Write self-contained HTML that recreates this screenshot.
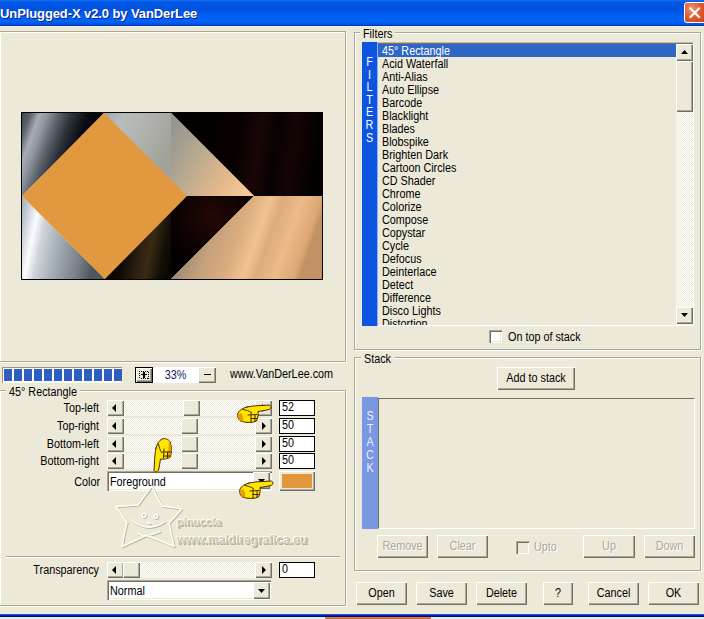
<!DOCTYPE html><html><head><meta charset="utf-8"><style>
html,body{margin:0;padding:0;}
body{width:704px;height:619px;overflow:hidden;position:relative;background:#ECE9D8;font-family:"Liberation Sans",sans-serif;font-size:11px;color:#000;}
body div, body svg{position:absolute;}
.t{white-space:pre;font-size:12px;transform:scaleX(0.9);}
</style></head><body>
<div style="left:0px;top:0px;width:704px;height:25px;background:linear-gradient(#1470F8 0%,#0058E4 8%,#0052E0 40%,#0062F6 68%,#0062F6 86%,#0054E6 96%,#004CDC 100%)"></div>
<div style="left:0px;top:25px;width:704px;height:1px;background:#0038B4"></div>
<div style="left:0px;top:26px;width:704px;height:1px;background:#EEF2FF"></div>
<div class="t" style="left:0px;top:6px;height:16px;line-height:16px;transform-origin:left top;font-weight:bold;font-size:13px;color:#fff;text-shadow:1px 1px #0A1E8C;letter-spacing:-0.1px;transform:none">UnPlugged-X v2.0 by VanDerLee</div>
<div style="left:684px;top:2px;width:24px;height:21px;border:1px solid #fff;border-radius:3px;box-sizing:border-box;background:radial-gradient(circle at 30% 30%,#F09070 0%,#E05A30 45%,#C8401A 100%)"></div>
<svg style="left:688px;top:6px" width="14" height="13" viewBox="0 0 14 13"><path d="M2.5 2.5 L11 11 M11 2.5 L2.5 11" stroke="#fff" stroke-width="2.2" stroke-linecap="square"/></svg>
<div style="left:0px;top:32px;width:347px;height:331px;border:1px solid #fff;box-sizing:border-box"></div>
<div style="left:-1px;top:31px;width:347px;height:331px;border:1px solid #ACA899;box-sizing:border-box"></div>
<svg style="left:21px;top:112px" width="302" height="168" viewBox="-1 -1 302 168">
<defs>
<linearGradient id="gTL" gradientUnits="userSpaceOnUse" x1="0" y1="0" x2="93" y2="34">
 <stop offset="0" stop-color="#3E444C"/><stop offset="0.08" stop-color="#5A6068"/><stop offset="0.17" stop-color="#A8ACB4"/><stop offset="0.24" stop-color="#9298A0"/>
 <stop offset="0.36" stop-color="#5A6068"/><stop offset="0.48" stop-color="#2C3238"/><stop offset="0.62" stop-color="#0C0E12"/><stop offset="0.8" stop-color="#000"/>
</linearGradient>
<linearGradient id="gTM" gradientUnits="userSpaceOnUse" x1="82" y1="0" x2="150" y2="30">
 <stop offset="0" stop-color="#A4A8AC"/><stop offset="0.25" stop-color="#B8BCBC"/><stop offset="0.6" stop-color="#B0B2AC"/><stop offset="1" stop-color="#A2A29A"/>
</linearGradient>
<linearGradient id="gTR" gradientUnits="userSpaceOnUse" x1="149" y1="0" x2="300" y2="20">
 <stop offset="0" stop-color="#040000"/><stop offset="0.45" stop-color="#070101"/><stop offset="0.6" stop-color="#1A0705"/><stop offset="0.7" stop-color="#080202"/><stop offset="0.82" stop-color="#140504"/><stop offset="1" stop-color="#030000"/>
</linearGradient>
<linearGradient id="gPe" gradientUnits="userSpaceOnUse" x1="149" y1="20" x2="235" y2="70">
 <stop offset="0" stop-color="#96968E"/><stop offset="0.3" stop-color="#B4A890"/><stop offset="0.7" stop-color="#E4B88C"/><stop offset="1" stop-color="#F6CC9C"/>
</linearGradient>
<linearGradient id="gBL" gradientUnits="userSpaceOnUse" x1="0" y1="0" x2="98" y2="20">
 <stop offset="0.16" stop-color="#A0A8B0"/><stop offset="0.28" stop-color="#D8DCE2"/><stop offset="0.35" stop-color="#FAFCFF"/>
 <stop offset="0.44" stop-color="#D0D4DA"/><stop offset="0.6" stop-color="#A8B0B8"/><stop offset="0.85" stop-color="#7A8088"/><stop offset="1.1" stop-color="#4E565E"/>
</linearGradient>
<linearGradient id="gBR" gradientUnits="userSpaceOnUse" x1="149" y1="83" x2="289" y2="132">
 <stop offset="0.15" stop-color="#928676"/><stop offset="0.35" stop-color="#C4A07A"/><stop offset="0.53" stop-color="#DCAE80"/><stop offset="0.64" stop-color="#F2C292"/><stop offset="0.72" stop-color="#DDAC7E"/><stop offset="0.84" stop-color="#EDBA88"/><stop offset="0.96" stop-color="#DDA874"/><stop offset="1.15" stop-color="#C29266"/>
</linearGradient>
<radialGradient id="gRed" cx="0.5" cy="0.25" r="0.6">
 <stop offset="0" stop-color="#240806"/><stop offset="1" stop-color="#030000"/>
</radialGradient>
<linearGradient id="gBM" gradientUnits="userSpaceOnUse" x1="83" y1="0" x2="181" y2="20">
 <stop offset="0" stop-color="#000"/><stop offset="0.45" stop-color="#0C0804"/><stop offset="0.62" stop-color="#2C2010"/><stop offset="0.72" stop-color="#3A2A12"/><stop offset="0.85" stop-color="#141008"/><stop offset="1" stop-color="#020202"/>
</linearGradient>
</defs>
<rect x="-0.5" y="-0.5" width="301" height="167" fill="none" stroke="#000" stroke-width="1"/>
<polygon points="0,0 82,0 0,83" fill="url(#gTL)"/>
<polygon points="82,0 149,0 149,83 82,83" fill="url(#gTM)"/>
<polygon points="149,0 300,0 300,83 232,83" fill="url(#gTR)"/>
<polygon points="149,0 232,83 149,83" fill="url(#gPe)"/>
<polygon points="0,83 83,166 0,166" fill="url(#gBL)"/>
<polygon points="83,83 149,83 149,166 83,166" fill="url(#gBM)"/>
<polygon points="149,83 232,83 149,166" fill="url(#gRed)"/>
<polygon points="232,83 300,83 300,166 149,166" fill="url(#gBR)"/>
<polygon points="82,0 165,83 83,166 0,83" fill="#E2983F"/>
</svg>
<div style="left:2px;top:367px;width:120px;height:16px;background:#fff;border-top:1px solid #9A9686;border-left:1px solid #9A9686;box-sizing:border-box"></div>
<div style="left:4px;top:369px;width:8px;height:12px;background:#2D5FC2"></div>
<div style="left:14px;top:369px;width:8px;height:12px;background:#2D5FC2"></div>
<div style="left:24px;top:369px;width:8px;height:12px;background:#2D5FC2"></div>
<div style="left:34px;top:369px;width:8px;height:12px;background:#2D5FC2"></div>
<div style="left:44px;top:369px;width:8px;height:12px;background:#2D5FC2"></div>
<div style="left:54px;top:369px;width:8px;height:12px;background:#2D5FC2"></div>
<div style="left:64px;top:369px;width:8px;height:12px;background:#2D5FC2"></div>
<div style="left:74px;top:369px;width:8px;height:12px;background:#2D5FC2"></div>
<div style="left:84px;top:369px;width:8px;height:12px;background:#2D5FC2"></div>
<div style="left:94px;top:369px;width:8px;height:12px;background:#2D5FC2"></div>
<div style="left:104px;top:369px;width:8px;height:12px;background:#2D5FC2"></div>
<div style="left:114px;top:369px;width:8px;height:12px;background:#2D5FC2"></div>
<div style="left:135px;top:367px;width:18px;height:16px;background:#000"></div>
<div style="left:136px;top:368px;width:16px;height:14px;background:#ECE9D8;box-shadow:inset 1px 1px #fff, inset -1px -1px #716F64, inset -2px -2px #ACA899;"></div>
<svg style="left:139px;top:371px" width="10" height="8" viewBox="0 0 10 8" shape-rendering="crispEdges"><path d="M0 0h1v1h-1zM2 0h1v1h-1zM4 0h1v1h-1zM6 0h1v1h-1zM8 0h1v1h-1zM0 2h1v1h-1zM0 4h1v1h-1zM0 6h1v1h-1zM2 7h1v1h-1zM4 7h1v1h-1zM6 7h1v1h-1zM8 7h1v1h-1zM9 1h1v1h-1zM9 3h1v1h-1zM9 5h1v1h-1zM9 7h1v1h-1z" fill="#000"/><path d="M4 1h2v6h-2z M2 3h6v1h-6z" fill="#000"/></svg>
<div style="left:153px;top:367px;width:45px;height:16px;background:#fff"></div>
<div class="t" style="left:153px;top:368px;height:14px;line-height:14px;transform-origin:center top;width:45px;text-align:center;color:#16185A">33%</div>
<div style="left:198px;top:367px;width:18px;height:16px;background:#ECE9D8;box-shadow:inset 1px 1px #fff, inset -1px -1px #716F64, inset -2px -2px #ACA899;"></div>
<div style="left:204px;top:374px;width:7px;height:1px;background:#000"></div>
<div class="t" style="left:230px;top:368px;height:13px;line-height:13px;transform-origin:left top;">www.VanDerLee.com</div>
<div style="left:0px;top:391px;width:347px;height:216px;border:1px solid #fff;box-sizing:border-box"></div>
<div style="left:-1px;top:390px;width:347px;height:216px;border:1px solid #ACA899;box-sizing:border-box"></div>
<div class="t" style="left:6px;top:386px;height:13px;line-height:13px;transform-origin:left top;background:#ECE9D8"> 45° Rectangle </div>
<div class="t" style="left:0px;top:401px;height:14px;line-height:14px;transform-origin:right top;width:99px;text-align:right">Top-left</div>
<div style="left:124px;top:400px;width:131px;height:16px;background-color:#ECE9D8;background-image:repeating-conic-gradient(#fff 0% 25%, #ECE9D8 0% 50%);background-size:2px 2px"></div>
<div style="left:107px;top:400px;width:17px;height:16px;background:#ECE9D8;box-shadow:inset 1px 1px #fff, inset -1px -1px #716F64, inset -2px -2px #ACA899;"></div>
<svg style="left:112px;top:404px" width="5" height="8" viewBox="0 0 5 8"><path d="M4 0V8L0 4Z" fill="#000"/></svg>
<div style="left:183px;top:400px;width:17px;height:16px;background:#ECE9D8;box-shadow:inset 1px 1px #fff, inset -1px -1px #716F64, inset -2px -2px #ACA899;"></div>
<div style="left:255px;top:400px;width:17px;height:16px;background:#ECE9D8;box-shadow:inset 1px 1px #fff, inset -1px -1px #716F64, inset -2px -2px #ACA899;"></div>
<svg style="left:262px;top:404px" width="5" height="8" viewBox="0 0 5 8"><path d="M0 0V8L4 4Z" fill="#000"/></svg>
<div style="left:279px;top:400px;width:36px;height:16px;background:#fff;border:1px solid #000;box-sizing:border-box"></div>
<div class="t" style="left:282px;top:400px;height:14px;line-height:14px;transform-origin:left top;">52</div>
<div class="t" style="left:0px;top:419px;height:14px;line-height:14px;transform-origin:right top;width:99px;text-align:right">Top-right</div>
<div style="left:124px;top:418px;width:131px;height:16px;background-color:#ECE9D8;background-image:repeating-conic-gradient(#fff 0% 25%, #ECE9D8 0% 50%);background-size:2px 2px"></div>
<div style="left:107px;top:418px;width:17px;height:16px;background:#ECE9D8;box-shadow:inset 1px 1px #fff, inset -1px -1px #716F64, inset -2px -2px #ACA899;"></div>
<svg style="left:112px;top:422px" width="5" height="8" viewBox="0 0 5 8"><path d="M4 0V8L0 4Z" fill="#000"/></svg>
<div style="left:181px;top:418px;width:17px;height:16px;background:#ECE9D8;box-shadow:inset 1px 1px #fff, inset -1px -1px #716F64, inset -2px -2px #ACA899;"></div>
<div style="left:255px;top:418px;width:17px;height:16px;background:#ECE9D8;box-shadow:inset 1px 1px #fff, inset -1px -1px #716F64, inset -2px -2px #ACA899;"></div>
<svg style="left:262px;top:422px" width="5" height="8" viewBox="0 0 5 8"><path d="M0 0V8L4 4Z" fill="#000"/></svg>
<div style="left:279px;top:418px;width:36px;height:16px;background:#fff;border:1px solid #000;box-sizing:border-box"></div>
<div class="t" style="left:282px;top:418px;height:14px;line-height:14px;transform-origin:left top;">50</div>
<div class="t" style="left:0px;top:437px;height:14px;line-height:14px;transform-origin:right top;width:99px;text-align:right">Bottom-left</div>
<div style="left:124px;top:436px;width:131px;height:16px;background-color:#ECE9D8;background-image:repeating-conic-gradient(#fff 0% 25%, #ECE9D8 0% 50%);background-size:2px 2px"></div>
<div style="left:107px;top:436px;width:17px;height:16px;background:#ECE9D8;box-shadow:inset 1px 1px #fff, inset -1px -1px #716F64, inset -2px -2px #ACA899;"></div>
<svg style="left:112px;top:440px" width="5" height="8" viewBox="0 0 5 8"><path d="M4 0V8L0 4Z" fill="#000"/></svg>
<div style="left:181px;top:436px;width:17px;height:16px;background:#ECE9D8;box-shadow:inset 1px 1px #fff, inset -1px -1px #716F64, inset -2px -2px #ACA899;"></div>
<div style="left:255px;top:436px;width:17px;height:16px;background:#ECE9D8;box-shadow:inset 1px 1px #fff, inset -1px -1px #716F64, inset -2px -2px #ACA899;"></div>
<svg style="left:262px;top:440px" width="5" height="8" viewBox="0 0 5 8"><path d="M0 0V8L4 4Z" fill="#000"/></svg>
<div style="left:279px;top:436px;width:36px;height:16px;background:#fff;border:1px solid #000;box-sizing:border-box"></div>
<div class="t" style="left:282px;top:436px;height:14px;line-height:14px;transform-origin:left top;">50</div>
<div class="t" style="left:0px;top:454px;height:14px;line-height:14px;transform-origin:right top;width:99px;text-align:right">Bottom-right</div>
<div style="left:124px;top:453px;width:131px;height:16px;background-color:#ECE9D8;background-image:repeating-conic-gradient(#fff 0% 25%, #ECE9D8 0% 50%);background-size:2px 2px"></div>
<div style="left:107px;top:453px;width:17px;height:16px;background:#ECE9D8;box-shadow:inset 1px 1px #fff, inset -1px -1px #716F64, inset -2px -2px #ACA899;"></div>
<svg style="left:112px;top:457px" width="5" height="8" viewBox="0 0 5 8"><path d="M4 0V8L0 4Z" fill="#000"/></svg>
<div style="left:181px;top:453px;width:17px;height:16px;background:#ECE9D8;box-shadow:inset 1px 1px #fff, inset -1px -1px #716F64, inset -2px -2px #ACA899;"></div>
<div style="left:255px;top:453px;width:17px;height:16px;background:#ECE9D8;box-shadow:inset 1px 1px #fff, inset -1px -1px #716F64, inset -2px -2px #ACA899;"></div>
<svg style="left:262px;top:457px" width="5" height="8" viewBox="0 0 5 8"><path d="M0 0V8L4 4Z" fill="#000"/></svg>
<div style="left:279px;top:453px;width:36px;height:16px;background:#fff;border:1px solid #000;box-sizing:border-box"></div>
<div class="t" style="left:282px;top:453px;height:14px;line-height:14px;transform-origin:left top;">50</div>
<div class="t" style="left:0px;top:475px;height:14px;line-height:14px;transform-origin:right top;width:100px;text-align:right">Color</div>
<div style="left:107px;top:471px;width:165px;height:20px;background:#fff;box-shadow:inset 1px 1px #ACA899, inset 2px 2px #716F64, inset -1px -1px #fff, inset -2px -2px #ECE9D8;"></div>
<div class="t" style="left:110px;top:475px;height:14px;line-height:14px;transform-origin:left top;">Foreground</div>
<div style="left:253px;top:472px;width:17px;height:17px;background:#ECE9D8;box-shadow:inset 1px 1px #fff, inset -1px -1px #716F64, inset -2px -2px #ACA899;"></div>
<svg style="left:258px;top:479px" width="7" height="4" viewBox="0 0 7 4"><path d="M0 0H7L3.5 4Z" fill="#000"/></svg>
<div style="left:279px;top:471px;width:36px;height:20px;background:#ECE9D8;box-shadow:inset 1px 1px #fff, inset -1px -1px #716F64, inset -2px -2px #ACA899;"></div>
<div style="left:282px;top:474px;width:30px;height:14px;background:#E2973F"></div>
<div style="left:6px;top:556px;width:334px;height:1px;background:#ACA899"></div>
<div style="left:6px;top:557px;width:334px;height:1px;background:#fff"></div>
<div class="t" style="left:0px;top:563px;height:14px;line-height:14px;transform-origin:right top;width:99px;text-align:right">Transparency</div>
<div style="left:124px;top:562px;width:131px;height:16px;background-color:#ECE9D8;background-image:repeating-conic-gradient(#fff 0% 25%, #ECE9D8 0% 50%);background-size:2px 2px"></div>
<div style="left:107px;top:562px;width:17px;height:16px;background:#ECE9D8;box-shadow:inset 1px 1px #fff, inset -1px -1px #716F64, inset -2px -2px #ACA899;"></div>
<svg style="left:112px;top:566px" width="5" height="8" viewBox="0 0 5 8"><path d="M4 0V8L0 4Z" fill="#000"/></svg>
<div style="left:123px;top:562px;width:17px;height:16px;background:#ECE9D8;box-shadow:inset 1px 1px #fff, inset -1px -1px #716F64, inset -2px -2px #ACA899;"></div>
<div style="left:255px;top:562px;width:17px;height:16px;background:#ECE9D8;box-shadow:inset 1px 1px #fff, inset -1px -1px #716F64, inset -2px -2px #ACA899;"></div>
<svg style="left:262px;top:566px" width="5" height="8" viewBox="0 0 5 8"><path d="M0 0V8L4 4Z" fill="#000"/></svg>
<div style="left:279px;top:562px;width:36px;height:16px;background:#fff;border:1px solid #000;box-sizing:border-box"></div>
<div class="t" style="left:282px;top:562px;height:14px;line-height:14px;transform-origin:left top;">0</div>
<div style="left:107px;top:580px;width:164px;height:20px;background:#fff;box-shadow:inset 1px 1px #ACA899, inset 2px 2px #716F64, inset -1px -1px #fff, inset -2px -2px #ECE9D8;"></div>
<div class="t" style="left:110px;top:584px;height:14px;line-height:14px;transform-origin:left top;">Normal</div>
<div style="left:253px;top:582px;width:17px;height:17px;background:#ECE9D8;box-shadow:inset 1px 1px #fff, inset -1px -1px #716F64, inset -2px -2px #ACA899;"></div>
<svg style="left:258px;top:589px" width="7" height="4" viewBox="0 0 7 4"><path d="M0 0H7L3.5 4Z" fill="#000"/></svg>
<div style="left:355px;top:33px;width:347px;height:318px;border:1px solid #fff;box-sizing:border-box"></div>
<div style="left:354px;top:32px;width:347px;height:318px;border:1px solid #ACA899;box-sizing:border-box"></div>
<div class="t" style="left:360px;top:28px;height:13px;line-height:13px;transform-origin:left top;background:#ECE9D8"> Filters </div>
<div style="left:362px;top:42px;width:15px;height:284px;background:#0D55E0"></div>
<div style="left:377px;top:42px;width:1px;height:284px;background:#8CB0F0"></div>
<div class="t" style="left:362px;top:56.0px;height:13px;line-height:13px;transform-origin:center top;width:15px;text-align:center;color:#fff">F</div>
<div class="t" style="left:362px;top:68.6px;height:13px;line-height:13px;transform-origin:center top;width:15px;text-align:center;color:#fff">I</div>
<div class="t" style="left:362px;top:81.2px;height:13px;line-height:13px;transform-origin:center top;width:15px;text-align:center;color:#fff">L</div>
<div class="t" style="left:362px;top:93.8px;height:13px;line-height:13px;transform-origin:center top;width:15px;text-align:center;color:#fff">T</div>
<div class="t" style="left:362px;top:106.4px;height:13px;line-height:13px;transform-origin:center top;width:15px;text-align:center;color:#fff">E</div>
<div class="t" style="left:362px;top:119.0px;height:13px;line-height:13px;transform-origin:center top;width:15px;text-align:center;color:#fff">R</div>
<div class="t" style="left:362px;top:131.6px;height:13px;line-height:13px;transform-origin:center top;width:15px;text-align:center;color:#fff">S</div>
<div style="left:378px;top:42px;width:316px;height:1px;background:#BEB9A8"></div>
<div style="left:378px;top:43px;width:316px;height:1px;background:#7A7262"></div>
<div style="left:378px;top:44px;width:298px;height:281px;overflow:hidden">
<div style="left:0px;top:0px;width:298px;height:13px;background:#2F66C6"></div>
<div class="t" style="left:4px;top:1px;height:13px;line-height:13px;transform-origin:left top;color:#fff">45° Rectangle</div>
<div class="t" style="left:4px;top:14px;height:13px;line-height:13px;transform-origin:left top;color:#000">Acid Waterfall</div>
<div class="t" style="left:4px;top:27px;height:13px;line-height:13px;transform-origin:left top;color:#000">Anti-Alias</div>
<div class="t" style="left:4px;top:40px;height:13px;line-height:13px;transform-origin:left top;color:#000">Auto Ellipse</div>
<div class="t" style="left:4px;top:53px;height:13px;line-height:13px;transform-origin:left top;color:#000">Barcode</div>
<div class="t" style="left:4px;top:66px;height:13px;line-height:13px;transform-origin:left top;color:#000">Blacklight</div>
<div class="t" style="left:4px;top:79px;height:13px;line-height:13px;transform-origin:left top;color:#000">Blades</div>
<div class="t" style="left:4px;top:92px;height:13px;line-height:13px;transform-origin:left top;color:#000">Blobspike</div>
<div class="t" style="left:4px;top:105px;height:13px;line-height:13px;transform-origin:left top;color:#000">Brighten Dark</div>
<div class="t" style="left:4px;top:118px;height:13px;line-height:13px;transform-origin:left top;color:#000">Cartoon Circles</div>
<div class="t" style="left:4px;top:131px;height:13px;line-height:13px;transform-origin:left top;color:#000">CD Shader</div>
<div class="t" style="left:4px;top:144px;height:13px;line-height:13px;transform-origin:left top;color:#000">Chrome</div>
<div class="t" style="left:4px;top:157px;height:13px;line-height:13px;transform-origin:left top;color:#000">Colorize</div>
<div class="t" style="left:4px;top:170px;height:13px;line-height:13px;transform-origin:left top;color:#000">Compose</div>
<div class="t" style="left:4px;top:183px;height:13px;line-height:13px;transform-origin:left top;color:#000">Copystar</div>
<div class="t" style="left:4px;top:196px;height:13px;line-height:13px;transform-origin:left top;color:#000">Cycle</div>
<div class="t" style="left:4px;top:209px;height:13px;line-height:13px;transform-origin:left top;color:#000">Defocus</div>
<div class="t" style="left:4px;top:222px;height:13px;line-height:13px;transform-origin:left top;color:#000">Deinterlace</div>
<div class="t" style="left:4px;top:235px;height:13px;line-height:13px;transform-origin:left top;color:#000">Detect</div>
<div class="t" style="left:4px;top:248px;height:13px;line-height:13px;transform-origin:left top;color:#000">Difference</div>
<div class="t" style="left:4px;top:261px;height:13px;line-height:13px;transform-origin:left top;color:#000">Disco Lights</div>
<div class="t" style="left:4px;top:274px;height:13px;line-height:13px;transform-origin:left top;color:#000">Distortion</div>
</div>
<div style="left:378px;top:325px;width:316px;height:1px;background:#fff"></div>
<div style="left:676px;top:44px;width:17px;height:281px;background-color:#ECE9D8;background-image:repeating-conic-gradient(#fff 0% 25%, #ECE9D8 0% 50%);background-size:2px 2px"></div>
<div style="left:676px;top:44px;width:17px;height:17px;background:#ECE9D8;box-shadow:inset 1px 1px #fff, inset -1px -1px #716F64, inset -2px -2px #ACA899;"></div>
<svg style="left:681px;top:50px" width="7" height="4" viewBox="0 0 7 4"><path d="M0 4H7L3.5 0Z" fill="#000"/></svg>
<div style="left:676px;top:61px;width:17px;height:51px;background:#ECE9D8;box-shadow:inset 1px 1px #fff, inset -1px -1px #716F64, inset -2px -2px #ACA899;"></div>
<div style="left:676px;top:307px;width:17px;height:17px;background:#ECE9D8;box-shadow:inset 1px 1px #fff, inset -1px -1px #716F64, inset -2px -2px #ACA899;"></div>
<svg style="left:681px;top:313px" width="7" height="4" viewBox="0 0 7 4"><path d="M0 0H7L3.5 4Z" fill="#000"/></svg>
<div style="left:693px;top:42px;width:1px;height:284px;background:#fff"></div>
<div style="left:489px;top:330px;width:13px;height:13px;background:#fff;box-shadow:inset 1px 1px #ACA899, inset 2px 2px #716F64, inset -1px -1px #fff, inset -2px -2px #ECE9D8;"></div>
<div class="t" style="left:508px;top:330px;height:14px;line-height:14px;transform-origin:left top;">On top of stack</div>
<div style="left:355px;top:358px;width:347px;height:214px;border:1px solid #fff;box-sizing:border-box"></div>
<div style="left:354px;top:357px;width:347px;height:214px;border:1px solid #ACA899;box-sizing:border-box"></div>
<div class="t" style="left:361px;top:353px;height:13px;line-height:13px;transform-origin:left top;background:#ECE9D8"> Stack </div>
<div style="left:497px;top:367px;width:78px;height:23px;background:#ECE9D8;box-shadow:inset 1px 1px #fff, inset -1px -1px #716F64, inset -2px -2px #ACA899;"></div>
<div class="t" style="left:497px;top:367px;height:23px;line-height:23px;transform-origin:center top;width:78px;height:23px;line-height:22px;text-align:center;color:#000">Add to stack</div>
<div style="left:362px;top:397px;width:16px;height:132px;background:#7A98E2"></div>
<div class="t" style="left:362px;top:410.0px;height:13px;line-height:13px;transform-origin:center top;width:16px;text-align:center;color:#E8EEFF">S</div>
<div class="t" style="left:362px;top:422.9px;height:13px;line-height:13px;transform-origin:center top;width:16px;text-align:center;color:#E8EEFF">T</div>
<div class="t" style="left:362px;top:435.8px;height:13px;line-height:13px;transform-origin:center top;width:16px;text-align:center;color:#E8EEFF">A</div>
<div class="t" style="left:362px;top:448.7px;height:13px;line-height:13px;transform-origin:center top;width:16px;text-align:center;color:#E8EEFF">C</div>
<div class="t" style="left:362px;top:461.6px;height:13px;line-height:13px;transform-origin:center top;width:16px;text-align:center;color:#E8EEFF">K</div>
<div style="left:378px;top:398px;width:317px;height:131px;background:#ECE9D8;border-top:1px solid #716F64;border-left:1px solid #716F64;border-right:1px solid #fff;border-bottom:1px solid #fff;box-sizing:border-box"></div>
<div style="left:377px;top:535px;width:51px;height:23px;background:#ECE9D8;box-shadow:inset 1px 1px #fff, inset -1px -1px #716F64, inset -2px -2px #ACA899;"></div>
<div class="t" style="left:377px;top:535px;height:23px;line-height:23px;transform-origin:center top;width:51px;height:23px;line-height:22px;text-align:center;color:#ACA899;text-shadow:1px 1px #fff">Remove</div>
<div style="left:437px;top:535px;width:51px;height:23px;background:#ECE9D8;box-shadow:inset 1px 1px #fff, inset -1px -1px #716F64, inset -2px -2px #ACA899;"></div>
<div class="t" style="left:437px;top:535px;height:23px;line-height:23px;transform-origin:center top;width:51px;height:23px;line-height:22px;text-align:center;color:#ACA899;text-shadow:1px 1px #fff">Clear</div>
<div style="left:516px;top:541px;width:13px;height:13px;background:#ECE9D8;box-shadow:inset 1px 1px #ACA899, inset 2px 2px #716F64, inset -1px -1px #fff, inset -2px -2px #ECE9D8;"></div>
<div class="t" style="left:534px;top:540px;height:14px;line-height:14px;transform-origin:left top;color:#ACA899;text-shadow:1px 1px #fff">Upto</div>
<div style="left:583px;top:535px;width:52px;height:23px;background:#ECE9D8;box-shadow:inset 1px 1px #fff, inset -1px -1px #716F64, inset -2px -2px #ACA899;"></div>
<div class="t" style="left:583px;top:535px;height:23px;line-height:23px;transform-origin:center top;width:52px;height:23px;line-height:22px;text-align:center;color:#ACA899;text-shadow:1px 1px #fff">Up</div>
<div style="left:644px;top:535px;width:51px;height:23px;background:#ECE9D8;box-shadow:inset 1px 1px #fff, inset -1px -1px #716F64, inset -2px -2px #ACA899;"></div>
<div class="t" style="left:644px;top:535px;height:23px;line-height:23px;transform-origin:center top;width:51px;height:23px;line-height:22px;text-align:center;color:#ACA899;text-shadow:1px 1px #fff">Down</div>
<div style="left:356px;top:582px;width:51px;height:23px;background:#ECE9D8;box-shadow:inset 1px 1px #fff, inset -1px -1px #716F64, inset -2px -2px #ACA899;"></div>
<div class="t" style="left:356px;top:582px;height:23px;line-height:23px;transform-origin:center top;width:51px;height:23px;line-height:22px;text-align:center;color:#000">Open</div>
<div style="left:416px;top:582px;width:51px;height:23px;background:#ECE9D8;box-shadow:inset 1px 1px #fff, inset -1px -1px #716F64, inset -2px -2px #ACA899;"></div>
<div class="t" style="left:416px;top:582px;height:23px;line-height:23px;transform-origin:center top;width:51px;height:23px;line-height:22px;text-align:center;color:#000">Save</div>
<div style="left:476px;top:582px;width:51px;height:23px;background:#ECE9D8;box-shadow:inset 1px 1px #fff, inset -1px -1px #716F64, inset -2px -2px #ACA899;"></div>
<div class="t" style="left:476px;top:582px;height:23px;line-height:23px;transform-origin:center top;width:51px;height:23px;line-height:22px;text-align:center;color:#000">Delete</div>
<div style="left:543px;top:582px;width:30px;height:23px;background:#ECE9D8;box-shadow:inset 1px 1px #fff, inset -1px -1px #716F64, inset -2px -2px #ACA899;"></div>
<div class="t" style="left:543px;top:582px;height:23px;line-height:23px;transform-origin:center top;width:30px;height:23px;line-height:22px;text-align:center;color:#000">?</div>
<div style="left:588px;top:582px;width:51px;height:23px;background:#ECE9D8;box-shadow:inset 1px 1px #fff, inset -1px -1px #716F64, inset -2px -2px #ACA899;"></div>
<div class="t" style="left:588px;top:582px;height:23px;line-height:23px;transform-origin:center top;width:51px;height:23px;line-height:22px;text-align:center;color:#000">Cancel</div>
<div style="left:648px;top:582px;width:51px;height:23px;background:#ECE9D8;box-shadow:inset 1px 1px #fff, inset -1px -1px #716F64, inset -2px -2px #ACA899;"></div>
<div class="t" style="left:648px;top:582px;height:23px;line-height:23px;transform-origin:center top;width:51px;height:23px;line-height:22px;text-align:center;color:#000">OK</div>
<svg style="left:110px;top:478px" width="80" height="76" viewBox="0 0 80 76">
<g fill="none" stroke-linecap="round" stroke-linejoin="round">
<g stroke="#BAB6A4" stroke-width="1.6" transform="translate(0.9,0.9)">
<path d="M42 8 Q46 18 52 28 Q62 29 71.5 31 Q66 38 59 45 Q61 56 64 68.5 Q50 62 36 57.5 Q24 63 12 68.5 Q14 56 17 44.5 Q11 36 6 28.5 Q17 27.5 28 27 Q35 17 42 8 Z"/>
<path d="M22.5 43 Q38 55 54.5 44"/><circle cx="34" cy="37.2" r="1.9"/><circle cx="45.8" cy="38.3" r="1.9"/><path d="M37.5 44.5 L40 45.5"/><path d="M27.5 55.5 Q30.5 56.5 33 58 M41 56.5 Q46 55 50 53.5"/><path d="M20.5 41.5 L22 42.5"/>
</g>
<g stroke="#FFFFFA" stroke-width="1.5">
<path d="M42 8 Q46 18 52 28 Q62 29 71.5 31 Q66 38 59 45 Q61 56 64 68.5 Q50 62 36 57.5 Q24 63 12 68.5 Q14 56 17 44.5 Q11 36 6 28.5 Q17 27.5 28 27 Q35 17 42 8 Z"/>
<path d="M22.5 43 Q38 55 54.5 44"/><circle cx="34" cy="37.2" r="1.9"/><circle cx="45.8" cy="38.3" r="1.9"/><path d="M37.5 44.5 L40 45.5"/><path d="M27.5 55.5 Q30.5 56.5 33 58 M41 56.5 Q46 55 50 53.5"/><path d="M20.5 41.5 L22 42.5"/>
</g>
</g></svg>
<div class="t" style="left:177px;top:515px;height:14px;line-height:14px;transform-origin:left top;font-weight:bold;font-size:11px;color:#CFCBB9;text-shadow:-1px -1px #FFFFF8, 1px 1px #ACA894;transform:none">pinuccia</div>
<div class="t" style="left:177px;top:533px;height:14px;line-height:14px;transform-origin:left top;font-weight:bold;font-size:12px;color:#CFCBB9;text-shadow:-1px -1px #FFFFF8, 1px 1px #ACA894;transform:none">www.maidiregrafica.eu</div>
<svg style="left:236px;top:403px" width="37" height="22" viewBox="0 0 37 22"><g stroke="#4A2800" stroke-width="1" stroke-linejoin="round" stroke-linecap="round">
<path d="M11 4 C16 3 22 2.5 26 2.5 L33 2 C35.5 2.2 35.5 5.8 33 6.5 C29 7.5 25 8 22 8.5 C22.5 11 22 15 20.5 18 C17 19.8 10 20 5 18.2 C2 16.5 1 13 2 10 C3.5 7 7 5 11 4 Z" fill="#FFE600"/>
<path d="M2.2 11 C1.8 15 3.5 17.5 7 18.8 C8 17 7 13 5.5 10 Z" fill="#E6A000" stroke="none"/><path d="M7 6.5 C10 7 13 8 15.5 9.5" fill="none"/>
<path d="M15 10.5 L15 19 M19 12 L19 18.5 M12 12 L21 11.5 M15 15.5 L21 15.5" fill="none"/>
</g></svg>
<svg style="left:238px;top:479px" width="37" height="22" viewBox="0 0 37 22"><g stroke="#4A2800" stroke-width="1" stroke-linejoin="round" stroke-linecap="round">
<path d="M11 4 C16 3 22 2.5 26 2.5 L33 2 C35.5 2.2 35.5 5.8 33 6.5 C29 7.5 25 8 22 8.5 C22.5 11 22 15 20.5 18 C17 19.8 10 20 5 18.2 C2 16.5 1 13 2 10 C3.5 7 7 5 11 4 Z" fill="#FFE600"/>
<path d="M2.2 11 C1.8 15 3.5 17.5 7 18.8 C8 17 7 13 5.5 10 Z" fill="#E6A000" stroke="none"/><path d="M7 6.5 C10 7 13 8 15.5 9.5" fill="none"/>
<path d="M15 10.5 L15 19 M19 12 L19 18.5 M12 12 L21 11.5 M15 15.5 L21 15.5" fill="none"/>
</g></svg>
<svg style="left:152px;top:437px" width="22" height="37" viewBox="0 0 22 37"><g transform="matrix(0,1,1,0,0,0)"><g stroke="#4A2800" stroke-width="1" stroke-linejoin="round" stroke-linecap="round">
<path d="M11 4 C16 3 22 2.5 26 2.5 L33 2 C35.5 2.2 35.5 5.8 33 6.5 C29 7.5 25 8 22 8.5 C22.5 11 22 15 20.5 18 C17 19.8 10 20 5 18.2 C2 16.5 1 13 2 10 C3.5 7 7 5 11 4 Z" fill="#FFE600"/>
<path d="M6 18.3 C10 19.8 16 19.8 20 18.2 C21.3 16.5 21.8 14.5 21.8 12.5 C19 15.5 13 17 6 16.5 Z" fill="#E6A000" stroke="none"/><path d="M7 6.5 C10 7 13 8 15.5 9.5" fill="none"/>
<path d="M15 10.5 L15 19 M19 12 L19 18.5 M12 12 L21 11.5 M15 15.5 L21 15.5" fill="none"/>
</g></g></svg>
<div style="left:0px;top:614px;width:704px;height:1px;background:#2450D0"></div>
<div style="left:0px;top:615px;width:704px;height:1px;background:#0424A8"></div>
<div style="left:0px;top:616px;width:704px;height:1px;background:#000C78"></div>
<div style="left:0px;top:617px;width:704px;height:2px;background:#E8ECF8"></div>
<div style="left:325px;top:617px;width:106px;height:2px;background:#D8703A"></div>
</body></html>
